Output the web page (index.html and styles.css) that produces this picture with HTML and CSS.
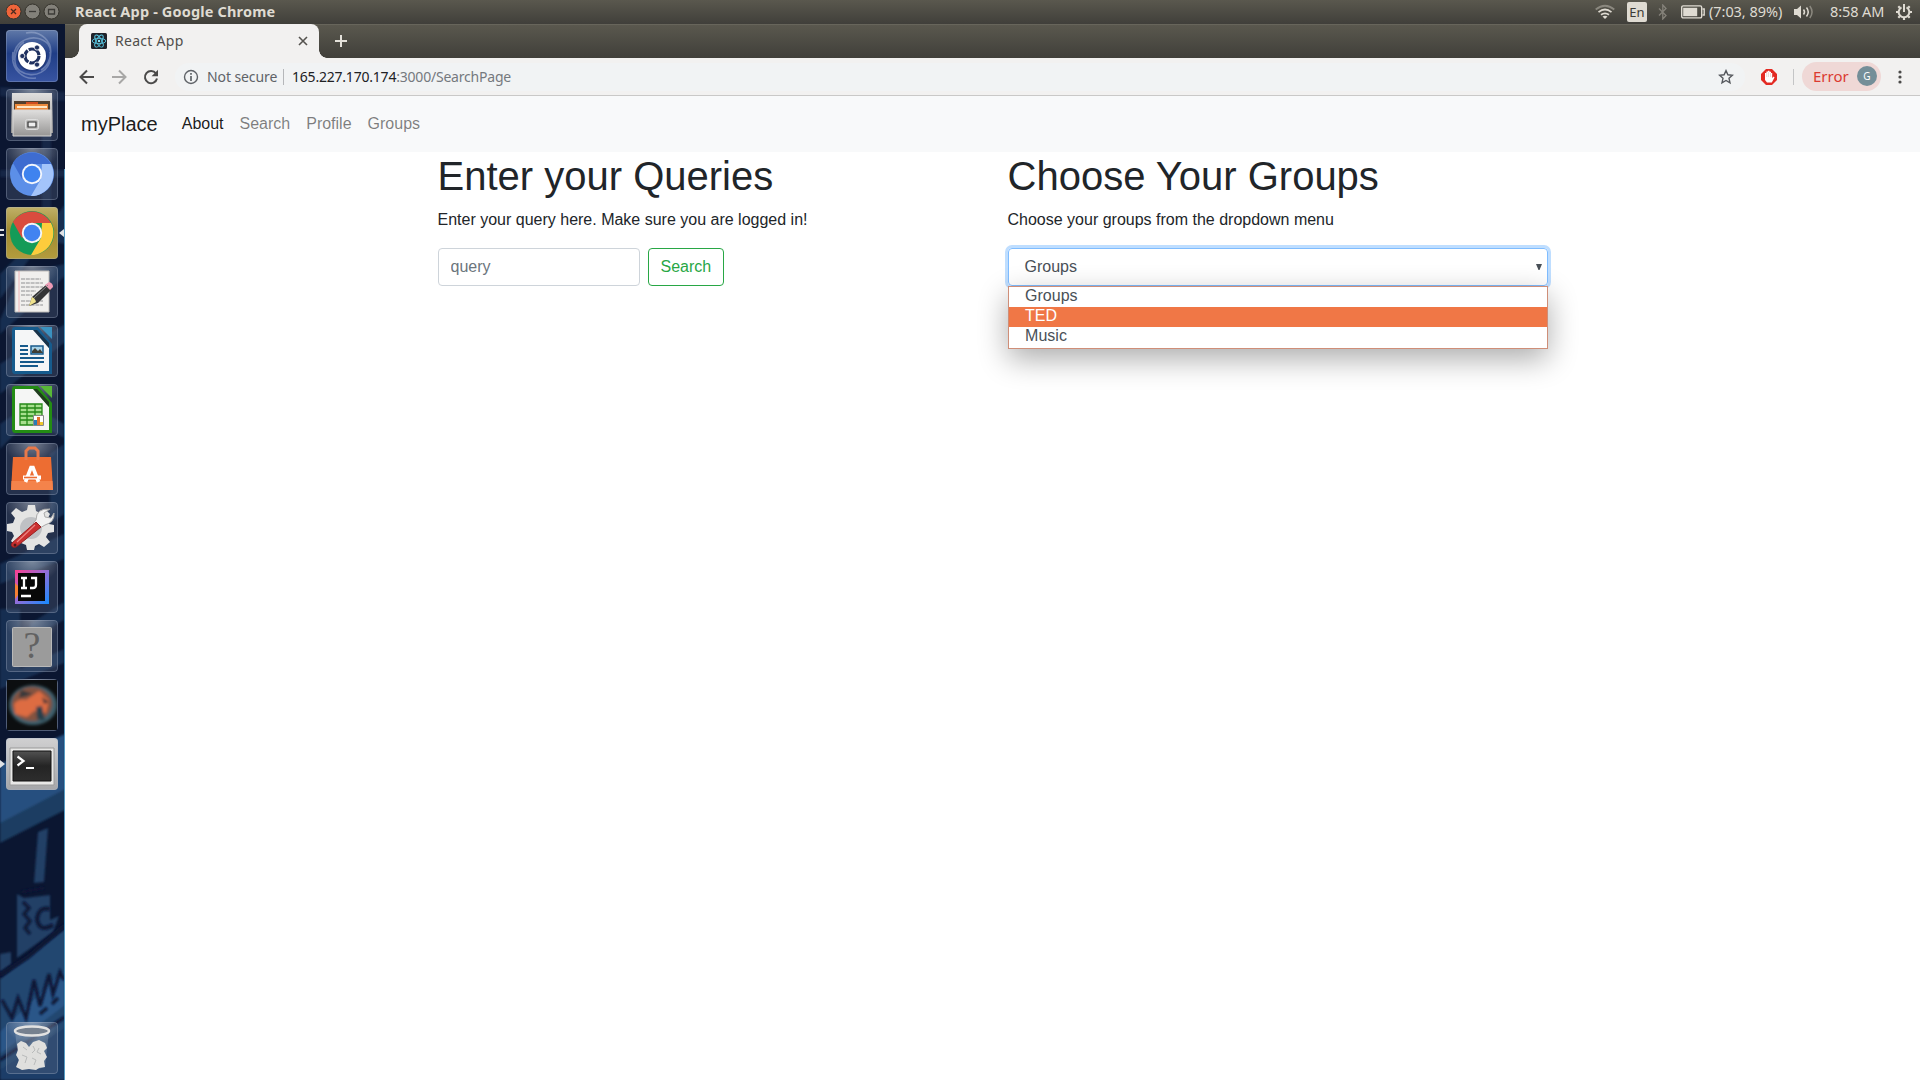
FILE: index.html
```html
<!DOCTYPE html>
<html lang="en">
<head>
<meta charset="utf-8">
<title>React App</title>
<link rel="stylesheet" href="styles.css">
</head>
<body>
<div class="desktop">
  <header class="panel">
    <div class="window-buttons">
      <svg width="60" height="24" viewBox="0 0 60 24">
        <circle cx="7.500" cy="11.500" r="7.500" fill="#f0653a" stroke="#35332c"/><path d="M5 9l5 5m0-5l-5 5" stroke="#4b2b1f" stroke-width="1.300"/>
        <circle cx="26.500" cy="11.500" r="7.500" fill="#83817a" stroke="#35332c"/><path d="M23 11.500h7" stroke="#3c3b37" stroke-width="1.300"/>
        <circle cx="45.500" cy="11.500" r="7.500" fill="#83817a" stroke="#35332c"/><path d="M42.500 9.500h6v4.500h-6z" fill="none" stroke="#3c3b37" stroke-width="1.300"/>
      </svg>
    </div>
    <span class="panel-title">React App - Google Chrome</span>
    <div class="indicators">
      <svg class="i-wifi" width="20" height="16" viewBox="0 0 20 16" fill="none" stroke="#dfdbd2" stroke-width="1.700"><path d="M.7 5.500Q10-2 19.300 5.500" stroke="#8b887f"/><path d="M3.500 8.200Q10 2.800 16.500 8.200M6 10.800q4-3 8 0"/><path d="M7.500 12.500L10 15l2.500-2.500q-2.500-1.500-5 0z" fill="#dfdbd2" stroke="none"/></svg>
      <span class="keyboard">En</span>
      <svg class="i-bt" width="10" height="16" viewBox="0 0 10 16" fill="none" stroke="#85827a" stroke-width="1.300"><path d="M1 4.500l7 7L4.800 15V1L8 4.500l-7 7"/></svg>
      <svg class="i-battery" width="24" height="14" viewBox="0 0 24 14" fill="none" stroke="#dfdbd2" stroke-width="1.400"><rect x=".7" y=".9" width="20" height="12" rx="1.500"/><path d="M21.500 4h1.700v6h-1.700"/><path d="M2.200 2.800h14v8.400h-14z" fill="#dfdbd2" stroke="none"/></svg>
      <span class="battery-text">(7:03, 89%)</span>
      <svg class="i-sound" width="20" height="16" viewBox="0 0 20 16" fill="none" stroke="#dfdbd2" stroke-width="1.500"><path d="M0 5h3l4-3.500v13L3 11H0z" fill="#dfdbd2" stroke="none"/><path d="M9.500 5.500q2 2.500 0 5M12.500 3.500q3.500 4.500 0 9"/><path d="M15.800 2q4.500 6 0 12" stroke="#8b887f"/></svg>
      <span class="clock">8:58 AM</span>
      <svg class="i-power" width="16" height="16" viewBox="0 0 16 16" fill="none" stroke="#dfdbd2"><path d="M5.500 3.300a5.300 5.300 0 1 0 5 0" stroke-width="2"/><path d="M8 0v8" stroke-width="2"/><path d="M3.800 3.800L2.300 2.300M12.200 3.800l1.500-1.500M2.300 8H0m13.700 0H16M3.800 12.200l-1.500 1.500m9.900-1.500l1.500 1.500M8 13.700V16" stroke-width="2.200"/></svg>
    </div>
  </header>

  <div class="workspace">
    <nav class="launcher">
      <svg class="wallpaper" width="65" height="1056" viewBox="0 0 65 1056" preserveAspectRatio="none">
        <defs><filter id="soft"><feGaussianBlur stdDeviation="1.100"/></filter></defs>
        <rect width="65" height="1056" fill="#0b1631"/>
        <g filter="url(#soft)" fill="#24466f">
          <path d="M0 63l65 5v9L0 72zM42 110h9v90h-9zM0 146h65v7H0z" opacity=".35"/>
          <path d="M65 180L40 215l25 5zM0 250l30-30 6 6L0 275zM20 250l45-10v12L0 310v-14zM0 340l65-40v18L0 370zM0 400l30-20 34 20v14L30 395 0 425zM50 430l14-10v70L50 500z" opacity=".5"/>
          <path d="M0 540l64-30v25L0 560zM0 585h20v60l44-20v14L0 665zM30 600l34-22v18l-34 18z" opacity=".5"/>
          <path d="M0 740l65-30v60L0 803z" fill="#27507f"/><path d="M0 799l65-34v21L0 819z" fill="#1d3d62"/>
          <path d="M38 808l10-4-4 54-10 1zM17 870l7 4 26-3v25l9-4-6 16-36 26z" fill="#213f66"/>
          <path d="M0 930l11-2v12L0 948z" fill="#213f66"/>
          <path d="M0 955l65-50v100L0 1056z" fill="#23466f"/>
          <path d="M0 1008l65-62v35L0 1030z" fill="#2a5688"/>
          <path d="M0 1046l65-42v52H0z" fill="#1a3c67"/>
        </g>
        <g filter="url(#soft)" fill="none" stroke="#0a1536" stroke-width="4">
          <path d="M50 885q-11-3-13 10 2 14 16 6M0 951l28-18 37-32"/>
          <path d="M23 878l6 6-5 6 6 7-5 7 5 6M22 868l22-4M2 976l10 18 6-20 8 20 8-38 6 26 9-32 4 20 7-22 4 8M40 990l7-6M52 980l6-6" stroke-width="3.200"/>
          <path d="M0 1036l65-43" stroke-width="3"/>
        </g>
        <path d="M64.500 145v911" stroke="#549cc4"/>
      </svg>

      <div class="tile dash"><svg viewBox="0 0 52 52"><g fill="none" stroke="#b9c6e2" stroke-opacity=".4" stroke-width="1.600"><path d="M8 30C5 10 30 1 42 14c6 8 1 22-7 26M44 22c3 20-17 28-30 19C5 34 9 18 18 12M20 3c14-3 28 8 24 24M30 48C18 50 4 40 7 22"/></g><circle cx="26" cy="27" r="15" fill="#12204c" opacity=".35"/><circle cx="26" cy="26" r="14" fill="#fff"/><circle cx="26" cy="26" r="7" fill="none" stroke="#1f3160" stroke-width="3.200" stroke-dasharray="13.500 1.200"/><g fill="#1f3160" stroke="#fff" stroke-width=".8"><circle cx="16.300" cy="26" r="2.600"/><circle cx="31" cy="17.500" r="2.600"/><circle cx="31" cy="34.600" r="2.600"/></g></svg></div>

      <div class="tile files"><svg viewBox="0 0 52 52"><defs><linearGradient id="metal" x2="0" y2="1"><stop stop-color="#e0dfde"/><stop offset="1" stop-color="#969594"/></linearGradient></defs><path d="M6 4h40l1 40H5z" fill="url(#metal)"/><path d="M8 12h36v15H8z" fill="#51402f"/><path d="M9 15h33v8H9z" fill="#ed8a3c"/><path d="M11 17h30v2H11z" fill="#ffe7c5"/><path d="M20 13h12v2H20z" fill="#cd4e20"/><path d="M7 21h38v26H7z" fill="url(#metal)" stroke="#d7d6d5"/><rect x="19.500" y="30.500" width="13" height="10" rx="2" fill="#bdbcbb" stroke="#dedede"/><path d="M22 33h8v5h-8z" fill="#eee" stroke="#333" stroke-width="1.200"/></svg></div>

      <div class="tile chromium"><svg viewBox="0 0 52 52"><circle cx="26" cy="26" r="22" fill="#5c8fe8"/><path d="M7 15A22 22 0 0 1 45 16H26L16 31z" fill="#3e6cd0"/><path d="M45 16A22 22 0 0 1 25 48l10-17 1-15z" fill="#a3c4fa"/><circle cx="26" cy="26" r="10.200" fill="#f3f6fc"/><circle cx="26" cy="26" r="8.300" fill="#3f83ef"/></svg></div>

      <div class="tile chrome"><svg viewBox="0 0 52 52"><circle cx="26" cy="26" r="22" fill="#149b58"/><path d="M7 15A22 22 0 0 1 45 16H26L16 31z" fill="#d94c3e"/><path d="M45 16A22 22 0 0 1 25 48l10-17 1-15z" fill="#fdcc3c"/><circle cx="26" cy="26" r="10.200" fill="#f6f6f6"/><circle cx="26" cy="26" r="8.300" fill="#4183f1"/></svg><i class="running double"></i><i class="focused"></i></div>

      <div class="tile"><svg viewBox="0 0 52 52"><path d="M9 5h34v41H9z" fill="#f0efed" stroke="#bcbab7"/><path d="M13 5v41" stroke="#eea6a8" stroke-width=".8"/><g stroke="#8f9092" stroke-width="1" stroke-dasharray="4 .8"><path d="M15 13h20M15 17h22M15 21h22M15 25h15M15 29h11M15 35h22M15 39h22"/></g><path d="M23 40l3-9L41 18l5 5L32 37z" fill="#343536"/><path d="M23 40l3-9q3 1 4 5z" fill="#eee18c"/><path d="M39 19l4-3q4 1 4 5l-3 3z" fill="#ee9bb6"/><path d="M28 32L42 19" stroke="#85878a"/></svg></div>

      <div class="tile"><svg viewBox="0 0 52 52"><path d="M9 2h23l14 17v30H9q-3 0-3-4V5q0-3 3-3z" fill="#165b8d"/><path d="M34 2h12v12z" fill="#3a91c0"/><path d="M9 5h19l15 18v23H9z" fill="#f5f6f7"/><path d="M27 5l16 18V18L31 5z" fill="#18334a"/><path d="M14 21h8M14 25h8M14 29h8M14 33h24M14 37h24M14 41h18" stroke="#175a8b" stroke-width="2"/><path d="M25 21h12v8H25z" fill="#a8d3e8" stroke="#175a8b" stroke-width="1.500"/><path d="M26 28v-2l3-3 3 3 2-2 3 4z" fill="#403f35"/></svg></div>

      <div class="tile"><svg viewBox="0 0 52 52"><path d="M9 2h23l14 17v30H9q-3 0-3-4V5q0-3 3-3z" fill="#238c14"/><path d="M34 2h12v12z" fill="#58b837"/><path d="M9 5h19l15 18v23H9z" fill="#f5f6f5"/><path d="M27 5l16 18V18L31 5z" fill="#203d1f"/><path d="M14 20h22v21H14z" fill="#a7df8e"/><path d="M14 20h22v21H14zM14 24h22M14 28h22M14 32h22M14 36h22M21 20v21M29 20v21" fill="none" stroke="#248817" stroke-width="1.300"/><path d="M27.500 31.500h10v10h-10z" fill="#fff" stroke="#888"/><path d="M28 36h3v5h-3z" fill="#267db7"/><path d="M31 33h3v8h-3z" fill="#e0732d"/><path d="M34 38h3v3h-3z" fill="#efc72c"/></svg></div>

      <div class="tile"><svg viewBox="0 0 52 52"><path d="M7 14h38l2 33H5z" fill="#ed6d32"/><path d="M5.500 38h41l.5 9H5z" fill="#f4834b"/><path d="M20 17V8l3-3h6l3 3v9" fill="none" stroke="#e8794a" stroke-width="3"/><path d="M19.500 39L25 24.500h2L32.500 39" fill="none" stroke="#fff" stroke-width="3.600"/><path d="M17 34.500h18" stroke="#fff" stroke-width="4"/><path d="M18 34.500h13" stroke="#ed6d32" stroke-width="1.600"/></svg></div>

      <div class="tile"><svg viewBox="0 0 52 52"><path d="M22 3h7l1 6 4 2 5-4 5 5-3 6 2 4 5 1v7l-6 1-2 4 4 5-6 5-5-3-4 2-1 4h-7l-1-5-5-2-5 3-5-5 3-5-2-4-5-1v-7l6-1 2-5-4-5 5-5 6 4 5-2z" fill="#e4e4e3"/><circle cx="25" cy="26" r="11" fill="#bfc1c4"/><path d="M30 18q0-12 14-11l-6 4 1 4 6 1 3-5q1 9-9 12l-5 3-7-5z" fill="#f1f1f1" stroke="#aaa"/><path d="M30 20l5 5-25 20q-6 1-4-4z" fill="#ca3030" stroke="#9b2121"/><path d="M11 40l18-17" stroke="#ec8582" stroke-width="1.200"/><circle cx="9" cy="43" r="1.500" fill="#501818"/></svg></div>

      <div class="tile"><svg viewBox="0 0 52 52"><defs><linearGradient id="idea" x2="1" y2="1"><stop stop-color="#ff3e8d"/><stop offset=".45" stop-color="#9a6bd5"/><stop offset="1" stop-color="#148bff"/></linearGradient></defs><path d="M9 9h34v34H9z" fill="url(#idea)"/><path d="M9 22l7 7-7 9z" fill="#f78032"/><path d="M12 12h27v28H12z" fill="#080808"/><path d="M15 17h6m-3 0v10m-3 0h6M25 17h5v7q0 3-3 3h-3M15 35h10" fill="none" stroke="#fff" stroke-width="2.300"/></svg></div>

      <div class="tile"><svg viewBox="0 0 52 52"><rect x="6.500" y="7.500" width="39" height="39" rx="1" fill="#9b9b9b" stroke="#b9b9b9"/><text x="26" y="38" class="glyph">?</text></svg></div>

      <div class="tile photo"><svg viewBox="0 0 52 52"><defs><filter id="haze"><feGaussianBlur stdDeviation="1.500"/></filter></defs><path d="M1 1h50v50H1z" fill="#0c0e10"/><g filter="url(#haze)"><ellipse cx="27" cy="26" rx="24" ry="20" fill="#3d5f6c"/><ellipse cx="26" cy="25" rx="20" ry="17" fill="#84523f"/><path d="M8 25q5-6 12-4l13-9 10 9-3 13-12-2-7 6-12-3z" fill="#dd6c42"/><path d="M30 28l6-1 3 15-8-2z" fill="#26404c"/><path d="M15 11l12 4-14 4zM36 18l7 5-5 2z" fill="#34383a"/></g></svg></div>

      <div class="tile terminal"><svg viewBox="0 0 52 52"><defs><linearGradient id="screen" x2="0" y2="1"><stop stop-color="#525252"/><stop offset=".5" stop-color="#242424"/><stop offset="1" stop-color="#2d2d2d"/></linearGradient></defs><path d="M4 10h44v37H4z" fill="#e8e8e7" stroke="#9a9a9a"/><path d="M7 13h38v30H7z" fill="url(#screen)" stroke="#111"/><path d="M11.500 18.500l6 4.500-6 4.500M20 30h8" fill="none" stroke="#fff" stroke-width="2.200"/></svg><i class="running"></i></div>

      <div class="tile trash"><svg viewBox="0 0 52 52"><path d="M9 9l4 36q13 5 26 0l4-36z" fill="#a8b8ca" opacity=".3"/><path d="M11 22l4-3 5 2 3 4 4-5 6-2 6 3 2 5-3 3 3 6-3 4 1 6-6 1-3 2-7-1-7 1-6-3 3-7-3-5 2-5z" fill="#dfdfdd"/><path d="M17 25l4 3M16 33l5 2-2 6M27 24l2 4-3 3M33 26l-2 4 4 2M26 36l4 2-2 5" fill="none" stroke="#b9bbbb"/><ellipse cx="26" cy="9" rx="17" ry="4.500" fill="#76818f" stroke="#e2e2e1" stroke-width="2.500"/></svg></div>
    </nav>

    <section class="browser">
      <div class="tab-strip">
        <div class="tab">
          <svg width="16" height="16" viewBox="0 0 16 16"><rect width="16" height="16" rx="1.500" fill="#20232a"/><g fill="none" stroke="#58c7e3" stroke-width=".9"><ellipse cx="8" cy="8" rx="6.800" ry="2.700"/><ellipse cx="8" cy="8" rx="6.800" ry="2.700" transform="rotate(60 8 8)"/><ellipse cx="8" cy="8" rx="6.800" ry="2.700" transform="rotate(120 8 8)"/></g><circle cx="8" cy="8" r="1.200" fill="#8ee6fb"/></svg>
          <span class="tab-title">React App</span>
          <svg class="tab-close" width="10" height="10" viewBox="0 0 10 10" stroke="#55534f" stroke-width="1.600"><path d="M1 1l8 8M9 1L1 9"/></svg>
        </div>
        <svg class="new-tab" width="12" height="12" viewBox="0 0 12 12" stroke="#e4e1da" stroke-width="2"><path d="M6 0v12M0 6h12"/></svg>
      </div>

      <div class="toolbar">
        <svg class="nav-icon" width="16" height="16" viewBox="0 0 16 16" fill="none" stroke="#4b4a49" stroke-width="2"><path d="M15 8H2M8 1.500L1.500 8 8 14.500"/></svg>
        <svg class="nav-icon" width="16" height="16" viewBox="0 0 16 16" fill="none" stroke="#a8a7a6" stroke-width="2"><path d="M1 8h13M8 1.500L14.500 8 8 14.500"/></svg>
        <svg class="nav-icon" width="16" height="16" viewBox="0 0 16 16"><path d="M13 4.500A6.100 6.100 0 1 0 14 9.500" fill="none" stroke="#4b4a49" stroke-width="2"/><path d="M15 .8v6.400H8.600z" fill="#4b4a49"/></svg>
        <div class="omnibox">
          <svg width="16" height="16" viewBox="0 0 16 16" fill="none" stroke="#5f6368"><circle cx="8" cy="8" r="6.500" stroke-width="1.400"/><path d="M8 7v5M8 4v1.700" stroke-width="1.700"/></svg>
          <span class="security">Not secure</span>
          <span class="url"><b>165.227.170.174</b>:3000/SearchPage</span>
          <svg class="star" width="16" height="16" viewBox="0 0 16 16" fill="none" stroke="#55585d" stroke-width="1.400"><path d="M8 1.600l1.900 4.200 4.500.5-3.400 3 1 4.500-4-2.300-4 2.300 1-4.500-3.400-3 4.500-.5z"/></svg>
        </div>
        <svg class="blocker" width="16" height="16" viewBox="0 0 16 16"><path d="M5 0h6l5 5v6l-5 5H5l-5-5V5z" fill="#e32a23"/><path d="M4 8V4h1.400V2.500H7V1.800h1.500v1H10V4h1.200v5l1.600-1.500.7.900-2.700 5.100H6L4 11z" fill="#fff"/><path d="M5.700 4v4M7.500 3v5M9.500 4v4" stroke="#d8a7a5" stroke-width=".4"/></svg>
        <i class="separator"></i>
        <div class="profile-chip"><span>Error</span><span class="avatar">G</span></div>
        <svg class="menu" width="4" height="14" viewBox="0 0 4 14" fill="#4b4a49"><circle cx="2" cy="2" r="1.600"/><circle cx="2" cy="7" r="1.600"/><circle cx="2" cy="12" r="1.600"/></svg>
      </div>

      <main class="page">
        <nav class="navbar">
          <a class="brand">myPlace</a>
          <a class="nav-link active">About</a>
          <a class="nav-link">Search</a>
          <a class="nav-link">Profile</a>
          <a class="nav-link">Groups</a>
        </nav>
        <div class="container">
          <section class="column">
            <h1>Enter your Queries</h1>
            <p>Enter your query here. Make sure you are logged in!</p>
            <form class="search-form">
              <input class="query" type="text" placeholder="query">
              <button class="search-button" type="button">Search</button>
            </form>
          </section>
          <section class="column">
            <h1>Choose Your Groups</h1>
            <p>Choose your groups from the dropdown menu</p>
            <div class="select">
              <span>Groups</span>
              <svg width="6" height="6" viewBox="0 0 6 6"><path d="M0 0h6L3.500 6h-1z" fill="#495057"/></svg>
              <ul class="options">
                <li>Groups</li>
                <li class="highlighted">TED</li>
                <li>Music</li>
              </ul>
            </div>
          </section>
        </div>
      </main>
    </section>
  </div>
</div>
</body>
</html>
```
FILE: styles.css
```css
* { box-sizing: border-box; }
body { margin: 0; overflow: hidden; font-family: "Liberation Sans", Arial, sans-serif; }
svg { display: block; flex: none; }

.desktop { width: 1920px; height: 1080px; display: flex; flex-direction: column; }

/* top panel */
.panel {
  height: 24px; flex: none; display: flex; align-items: center;
  background: linear-gradient(#5a584e, #403f3a);
  color: #dfdbd2; font: 15px/22px "Noto Sans", sans-serif;
}
.window-buttons { width: 75px; padding-left: 6px; }
.panel-title { font-weight: 700; font-size: 14.5px; letter-spacing: .16px; white-space: nowrap; padding-bottom: 2px; }
.indicators { margin-left: auto; display: flex; align-items: center; padding-right: 8px; white-space: nowrap; }
.i-wifi { margin-right: 12px; }
.keyboard { width: 20px; height: 20px; border-radius: 2px; background: #dfdbd2; color: #3c3b37; font-size: 13px; line-height: 20px; text-align: center; margin-right: 11px; }
.i-bt { margin-right: 13px; }
.i-battery { margin-right: 4px; }
.battery-text { width: 73px; margin-right: 12px; font-size: 14.5px; padding-bottom: 2px; letter-spacing: -.05px; }
.i-sound { margin-right: 16px; }
.clock { width: 54px; margin-right: 12px; font-size: 14.5px; padding-bottom: 2px; letter-spacing: -.1px; }

.workspace { flex: 1; display: flex; min-height: 0; }

/* launcher */
.launcher {
  position: relative; width: 65px; flex: none;
  display: flex; flex-direction: column; gap: 7px; padding: 6px 7px 6px 6px;
}
.wallpaper { position: absolute; left: 0; top: 0; }
.tile {
  position: relative; width: 52px; height: 52px; flex: none; border-radius: 4px;
  background: radial-gradient(ellipse 28px 22px at 50% 0, rgba(220, 225, 232, .45), transparent), rgba(100, 112, 138, .3);
  box-shadow: inset 0 0 0 1px rgba(170, 185, 205, .32);
}
.tile svg { width: 52px; height: 52px; }
.dash { background: linear-gradient(#6079a8, #203e87 45%, #3854a1); }
.chrome { background: linear-gradient(#c0b168, #a08a31 45%, #b39c3d); }
.terminal { background: linear-gradient(#d0d0d1, #a5a6a9); }
.trash { margin-top: auto; }
.glyph { font: 38px "Liberation Serif", serif; fill: #626262; text-anchor: middle; }
.running { position: absolute; left: -6px; top: 22px; border: 4px solid transparent; border-left: 5px solid #e0e2e5; border-right: 0; }
.running.double { height: 7px; width: 4px; border: solid #e0e2e5; border-width: 2px 0; }
.focused { position: absolute; right: -6px; top: 22px; border: 4px solid transparent; border-right: 5px solid #e0e2e5; border-left: 0; }

/* browser chrome */
.browser { flex: 1; display: flex; flex-direction: column; min-width: 0; font-size: 16px; }
.tab-strip {
  height: 34px; flex: none; display: flex; align-items: center;
  background: linear-gradient(#67655b 1px, #5a584e 1px, #403f3a); padding-left: 14px;
}
.tab {
  position: relative; width: 240px; height: 34px; padding: 0 11px 0 12px;
  display: flex; align-items: center; background: #f2f1f0; border-radius: 8px 8px 0 0;
}
.tab::before, .tab::after { content: ""; position: absolute; bottom: 0; width: 8px; height: 8px; }
.tab::before { left: -8px; background: radial-gradient(circle at 0 0, transparent 7.5px, #f2f1f0 8px); }
.tab::after { right: -8px; background: radial-gradient(circle at 100% 0, transparent 7.5px, #f2f1f0 8px); }
.tab-title { margin-left: 8px; font: 14px/20px "Noto Sans", sans-serif; letter-spacing: .28px; color: #504e4b; padding-bottom: 1px; }
.tab-close { margin-left: auto; }
.new-tab { margin-left: 16px; }

.toolbar {
  height: 38px; flex: none; display: flex; align-items: center; padding-left: 14px;
  background: #f2f1f0; border-bottom: 1px solid #c9c8c7; font-family: "Noto Sans", sans-serif; font-size: 14px;
}
.nav-icon { margin-right: 16px; }
.omnibox {
  width: 1570px; height: 28px; border-radius: 14px; background: #f1f3f4;
  display: flex; align-items: center; padding: 0 11px 0 8px;
}
.security { margin-left: 8px; padding-right: 7px; border-right: 1px solid #b5b7ba; color: #5f6368; line-height: 16px; width: 77px; white-space: nowrap; letter-spacing: -.1px; }
.url { margin-left: 8px; color: #75797e; white-space: nowrap; letter-spacing: -.21px; }
.url b { font-weight: 400; color: #202124; }
.star { margin-left: auto; }
.blocker { margin-left: 16px; }
.separator { width: 1px; height: 16px; margin: 0 8px 0 16px; background: #c4c5c6; }
.profile-chip { width: 79px; height: 29px; border-radius: 15px; background: #efd8d6; color: #db3a30; display: flex; align-items: center; justify-content: space-between; padding: 0 4px 1px 11px; font-size: 15px; }
.avatar { width: 20px; height: 20px; border-radius: 50%; background: #748e98; color: #fff; font-size: 10px; line-height: 20px; text-align: center; }
.menu { margin-left: 17px; }

/* web page */
.page { flex: 1; background: #fff; color: #212529; line-height: 1.5; }
.navbar { height: 56px; background: #f8f9fa; display: flex; align-items: center; padding: 0 16px; }
.brand { font-size: 20px; line-height: 30px; margin-right: 16px; color: rgba(0, 0, 0, .9); }
.nav-link { padding: 0 8px; color: rgba(0, 0, 0, .5); }
.nav-link.active { color: rgba(0, 0, 0, .9); }
.container { width: 1140px; margin: 0 auto; display: flex; }
.column { width: 570px; padding: 0 15px; }
h1 { margin: 0 0 8px; font-size: 40px; font-weight: 400; line-height: 48px; }
p { margin: 0 0 16px; }
.search-form { display: flex; gap: 8px; }
.query { width: 202px; height: 38px; padding: 6px 12px; border: 1px solid #ced4da; border-radius: 4px; font: inherit; }
.query::placeholder { color: #6c757d; opacity: 1; }
.search-button { height: 38px; padding: 6px 12px; border: 1px solid #28a745; border-radius: 4px; background: none; color: #28a745; font: inherit; }
.select {
  position: relative; height: 38px; padding: 0 5px 0 16px; display: flex; align-items: center; justify-content: space-between;
  border: 1px solid #80bdff; border-radius: 4px; box-shadow: 0 0 0 3px #bfdeff; color: #495057;
}
.options {
  position: absolute; left: -1px; right: -1px; top: 37px; height: 63px; margin: 0; padding: 0; list-style: none;
  border: 1px solid #cf8e78; background: #fff; line-height: 18px;
  box-shadow: 0 10px 30px rgba(0, 0, 0, .33);
}
.options li { height: 20px; padding-left: 16.6px; }
.options .highlighted { background: #f07746; color: #fff; }
```
